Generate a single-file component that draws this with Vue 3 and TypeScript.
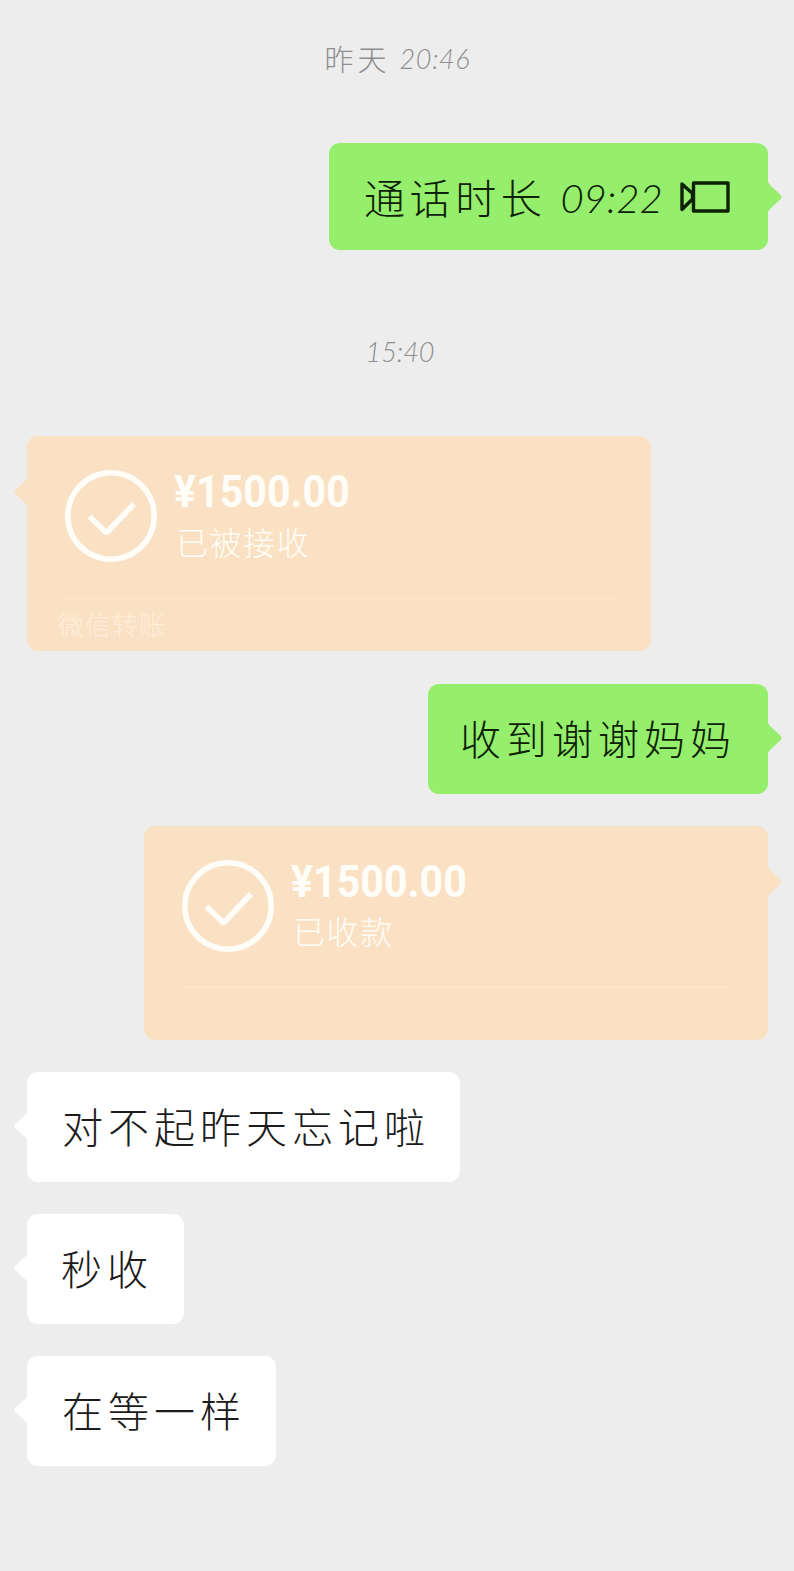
<script setup lang="ts">
type Side = 'left' | 'right'

interface Item {
  kind: 'time' | 'call' | 'text' | 'transfer'
  side?: Side
  id: string
  text?: string
  digits?: string
  amount?: string
  status?: string
  footer?: string
}

const items: Item[] = [
  { kind: 'time', id: 't1', text: '昨天', digits: '20:46' },
  { kind: 'call', id: 'call', side: 'right', text: '通话时长', digits: '09:22' },
  { kind: 'time', id: 't2', digits: '15:40' },
  { kind: 'transfer', id: 'card1', side: 'left', amount: '¥1500.00', status: '已被接收', footer: '微信转账' },
  { kind: 'text', id: 'thanks', side: 'right', text: '收到谢谢妈妈' },
  { kind: 'transfer', id: 'card2', side: 'right', amount: '¥1500.00', status: '已收款', footer: '微信转账' },
  { kind: 'text', id: 'sorry', side: 'left', text: '对不起昨天忘记啦' },
  { kind: 'text', id: 'quick', side: 'left', text: '秒收' },
  { kind: 'text', id: 'same', side: 'left', text: '在等一样' },
]
</script>

<template>
  <main class="chat">
    <section v-for="item in items" :key="item.id" class="row" :class="[item.kind, item.side, item.id]">
      <template v-if="item.kind === 'time'">
        <span v-if="item.text" class="day">{{ item.text }}</span>
        <span class="clock">{{ item.digits }}</span>
      </template>

      <div v-else class="bubble">
        <svg class="tail" viewBox="0 0 14 30" width="14" height="30" aria-hidden="true">
          <path d="M0 0 Q1 2 3 4 L12.5 12.8 Q14.4 15 12.5 17.2 L3 26 Q1 28 0 30Z" />
        </svg>

        <template v-if="item.kind === 'transfer'">
          <div class="body">
            <svg class="check" viewBox="0 0 92 92" width="92" height="92" aria-hidden="true">
              <circle cx="46" cy="46" r="43.2" />
              <path d="M24.5 46.5 L40 61.5 Q41.5 62.7 43 61.3 L69 34" />
            </svg>
            <div class="info">
              <div class="amount">{{ item.amount }}</div>
              <div class="status">{{ item.status }}</div>
            </div>
          </div>
          <div class="footer">{{ item.footer }}</div>
        </template>

        <template v-else>
          <span class="words">{{ item.text }}</span>
          <template v-if="item.kind === 'call'">
            <span class="duration">{{ item.digits }}</span>
            <svg class="camera" viewBox="0 0 50 32" width="50" height="32" aria-hidden="true">
              <path d="M13.5 2H48V30H13.5Z M2 3V28.5L12.5 18V12.5Z" />
            </svg>
          </template>
        </template>
      </div>
    </section>
  </main>
</template>

<style>
html,
body {
  margin: 0;
  background: #ededed;
}
</style>

<style scoped>
.chat {
  box-sizing: border-box;
  width: 794px;
  height: 1571px;
  padding: 39px 26px 0 27px;
  overflow: hidden;
  background: #ededed;
  font-family: "Noto Sans CJK SC", sans-serif;
  font-weight: 300;
}
.row {
  display: flex;
}
.right {
  justify-content: flex-end;
}
.time {
  justify-content: center;
  height: 40px;
  align-items: center;
  color: #8e8e8e;
  line-height: 40px;
}
.day {
  margin: -3px 9px 0 0;
  font-size: 29px;
  letter-spacing: 4px;
}
.clock {
  font-family: Lato, sans-serif;
  font-style: italic;
  font-size: 27px;
  letter-spacing: 0.6px;
}
.t2 {
  margin-top: 82px;
  padding-left: 5px;
}
.t2 .clock { letter-spacing: 0; }

.bubble {
  position: relative;
  box-sizing: border-box;
  height: 110px;
  border-radius: 11px;
  display: flex;
  align-items: center;
  background: #fff;
  color: #1b1b1b;
}
.tail {
  position: absolute;
  top: 39px;
  left: 100%;
  margin-left: -0.5px;
  fill: #fff;
}
.left .tail {
  left: auto;
  right: 100%;
  margin: 0 -0.5px 0 0;
  transform: scaleX(-1);
}
.words {
  margin-top: -4px;
  font-size: 41px;
  line-height: 60px;
  letter-spacing: 5px;
  white-space: nowrap;
}
.call .bubble,
.text.right .bubble {
  background: #95ee6c;
  color: #0c2105;
}
.call .tail,
.text.right .tail {
  fill: #95ee6c;
}

.call { margin-top: 64px; }
.call .bubble {
  width: 439px;
  height: 107px;
  padding-left: 35px;
  padding-top: 3px;
}
.call .words { letter-spacing: 4.6px; }
.duration {
  width: 100px;
  margin-left: 14px;
  font-family: Lato, sans-serif;
  font-style: italic;
  font-size: 40px;
  line-height: 50px;
  white-space: nowrap;
}
.camera {
  margin-left: 20px;
  margin-top: -3px;
  fill: none;
  stroke: #0c2105;
  stroke-width: 3.4;
  stroke-linejoin: round;
}

.transfer .bubble {
  width: 624px;
  height: 215px;
  flex-direction: column;
  align-items: stretch;
  background: #fbe1c3;
  color: #fffdf7;
}
.transfer .tail {
  top: 41px;
  fill: #fbe1c3;
}
.body {
  display: flex;
  height: 163px;
  box-sizing: border-box;
  margin: 0 34px 0 36px;
  padding: 34px 0 0 2px;
  border-bottom: 2px solid #fce3c9;
}
.check {
  flex: none;
  fill: none;
  stroke: #fffdf7;
  stroke-width: 5.6;
}
.info {
  margin-left: 17px;
}
.amount {
  font-family: Roboto, sans-serif;
  font-weight: 700;
  font-size: 45px;
  line-height: 44px;
  white-space: nowrap;
  transform: scaleX(0.915);
  transform-origin: left center;
}
.status {
  margin: 5px 0 0 2px;
  font-size: 32px;
  line-height: 44px;
  letter-spacing: 1.6px;
}
.footer {
  margin: 6px 0 0 31px;
  font-size: 26px;
  line-height: 38px;
  letter-spacing: 1px;
  color: #fdedda;
}
.card1 { margin-top: 64px; }
.card2 .bubble { height: 214px; }
.card2 .body { height: 162px; }
.card2 .status { margin-top: 4px; }
.card2 .footer { color: #fbe2c6; }

.thanks,
.card2,
.sorry,
.quick,
.same { margin-top: 32px; }
.thanks { margin-top: 33px; }
.thanks .bubble { width: 340px; padding-left: 32px; }
.sorry .bubble { width: 433px; padding-left: 35px; }
.quick .bubble { width: 157px; padding-left: 34px; }
.same .bubble { width: 249px; padding-left: 35px; }
</style>
